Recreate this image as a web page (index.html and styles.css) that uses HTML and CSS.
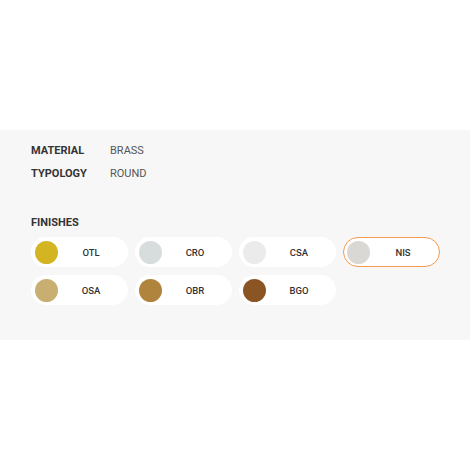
FILE: index.html
```html
<!DOCTYPE html>
<html>
<head>
<meta charset="utf-8">
<link rel="stylesheet" href="styles.css">
</head>
<body>
<div class="top"></div>
<section class="panel">
  <div class="specs">
    <div class="spec"><span class="key">MATERIAL</span><span class="val">BRASS</span></div>
    <div class="spec"><span class="key">TYPOLOGY</span><span class="val">ROUND</span></div>
  </div>
  <h3 class="title">FINISHES</h3>
  <div class="finishes">
    <div class="pill"><span class="dot otl"></span><span class="name">OTL</span></div>
    <div class="pill"><span class="dot cro"></span><span class="name">CRO</span></div>
    <div class="pill"><span class="dot csa"></span><span class="name">CSA</span></div>
    <div class="pill active"><span class="dot nis"></span><span class="name">NIS</span></div>
    <div class="pill"><span class="dot osa"></span><span class="name">OSA</span></div>
    <div class="pill"><span class="dot obr"></span><span class="name">OBR</span></div>
    <div class="pill"><span class="dot bgo"></span><span class="name">BGO</span></div>
  </div>
</section>
</body>
</html>
```
FILE: styles.css
```css
html, body { margin: 0; padding: 0; background: #fff; }
body { font-family: Roboto, "Liberation Sans", Arial, sans-serif; color: #333; }
.top { height: 130px; }
.panel {
  background: #f7f7f7;
  height: 210px;
  box-sizing: border-box;
  padding: 14px 31px 0 31px;
}
.specs { display: flex; flex-direction: column; gap: 9px; }
.spec { display: flex; font-size: 11px; line-height: 14px; }
.key { width: 79px; font-weight: 700; color: #333; }
.val { color: #555; }
.title { margin: 35px 0 0 0; font-size: 11px; line-height: 14px; font-weight: 700; color: #333; }
.finishes {
  margin-top: 7px;
  display: grid;
  grid-template-columns: repeat(4, 97px);
  column-gap: 7px;
  row-gap: 8px;
}
.pill {
  height: 30px;
  box-sizing: border-box;
  background: #fff;
  border-radius: 15px;
  display: flex;
  align-items: center;
  padding: 0 4px;
}
.pill.active { border: 1.5px solid #f59a4e; padding: 0 2.5px; }
.dot { width: 23px; height: 23px; border-radius: 50%; flex: none; }
.name { flex: 1; text-align: center; font-size: 9.5px; font-weight: 500; color: #333; }
.otl { background: #d3b523; }
.cro { background: #d7dcdc; }
.csa { background: #ebebeb; }
.nis { background: #dad8d4; }
.osa { background: #c8ae71; }
.obr { background: #b0843d; }
.bgo { background: #8b5424; }
```
